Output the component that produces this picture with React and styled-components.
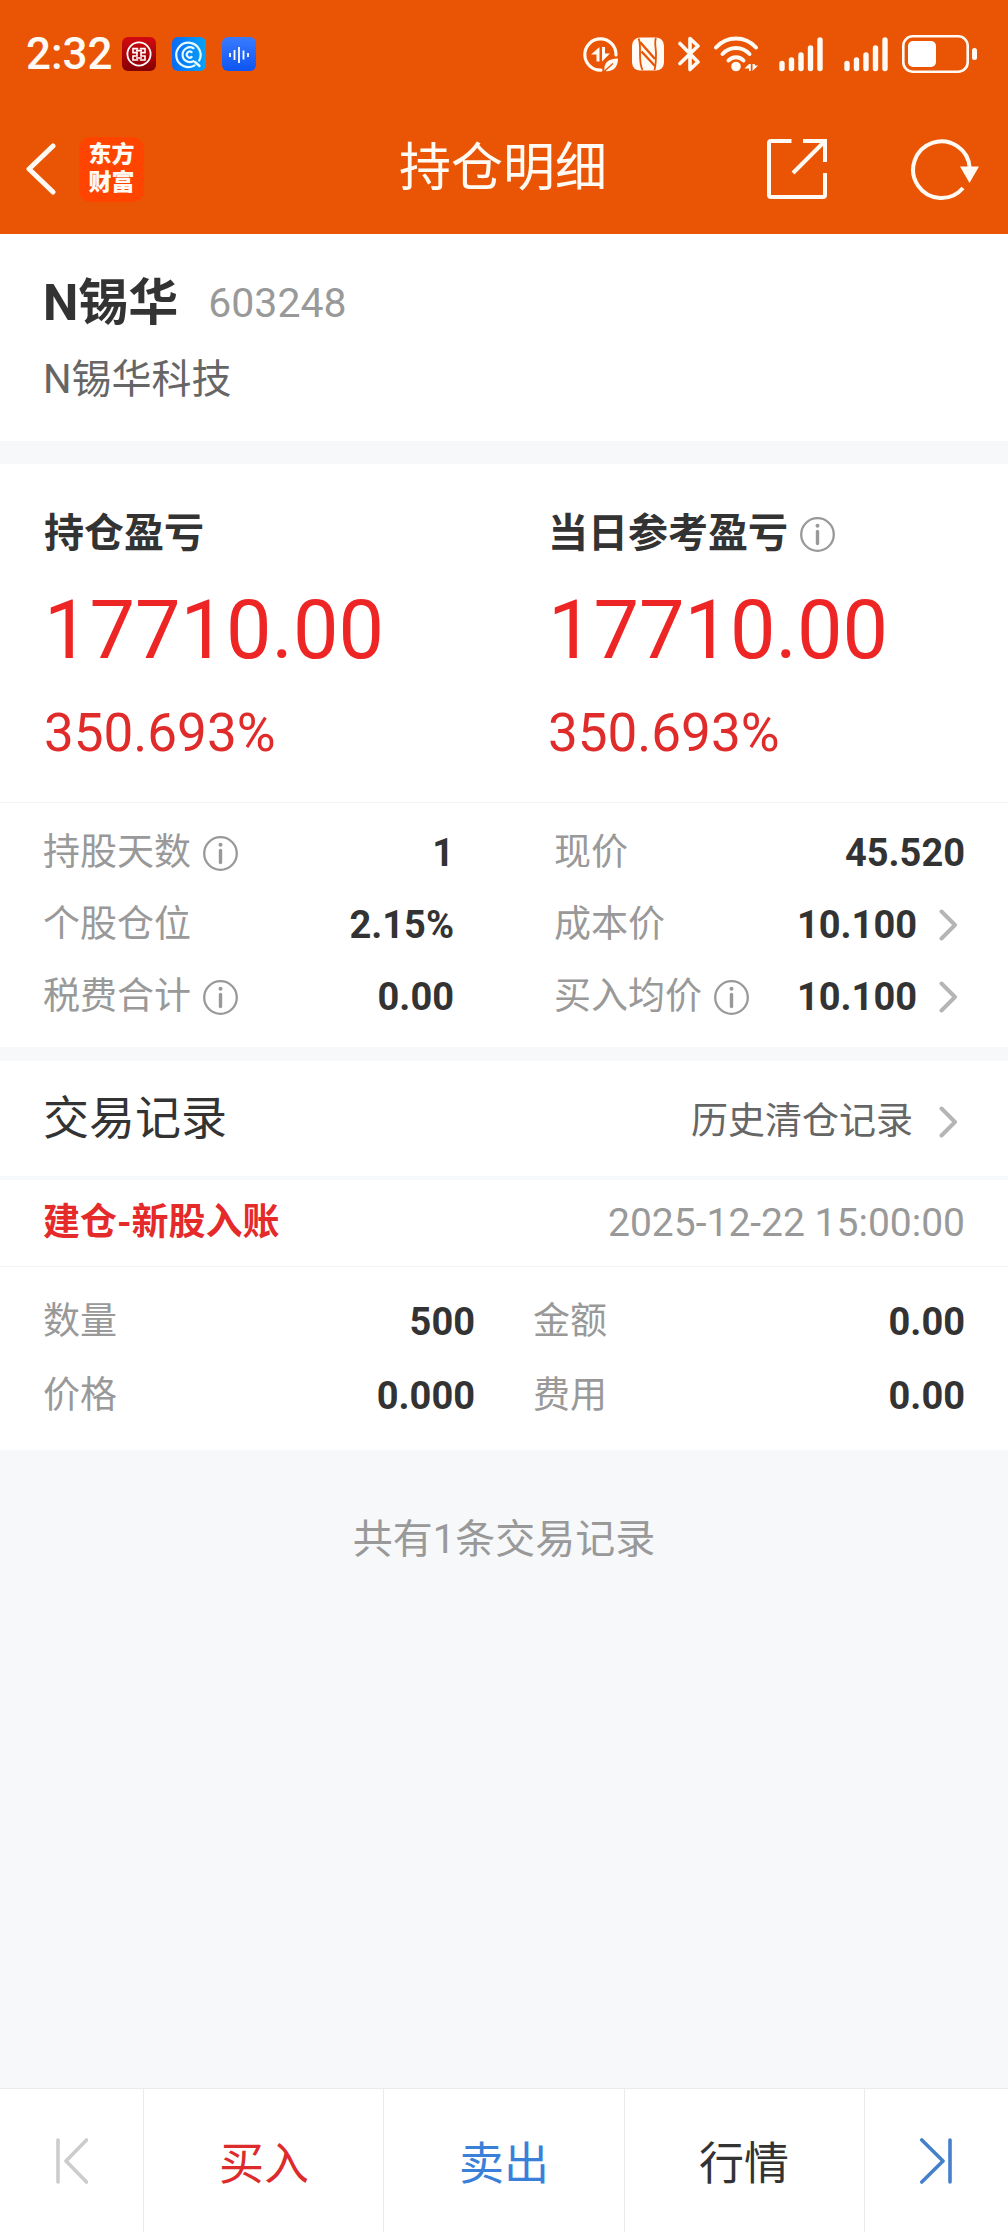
import React from "react";
import styled, { createGlobalStyle } from "styled-components";

const GlobalStyle = createGlobalStyle`
  * {
    box-sizing: border-box;
  }
  body {
    margin: 0;
    background: #f7f8fa;
    font-family: Roboto, "Noto Sans CJK SC", sans-serif;
    color: #333333;
  }
  h1, h2, h3, p, dl, dd {
    margin: 0;
    font-weight: 400;
  }
  button {
    border: 0;
    padding: 0;
    background: none;
    font: inherit;
    color: inherit;
    cursor: pointer;
  }
  svg {
    display: block;
    flex: none;
  }
`;

const Page = styled.div`
  min-height: 100vh;
  display: flex;
  flex-direction: column;
`;

const Top = styled.header`
  background: #e95504;
  color: #fffaf4;
`;
const StatusBar = styled.div`
  height: 108px;
  padding: 0 31px 0 26px;
  display: flex;
  align-items: center;
  justify-content: space-between;
`;
const StatusGroup = styled.div`
  display: flex;
  align-items: center;
  gap: ${({ $gap }) => $gap}px;
`;
const Time = styled.time`
  font-size: 44px;
  font-weight: 500;
  line-height: 48px;
`;
const NavBar = styled.div`
  height: 126px;
  padding: 0 28px 4px 26px;
  display: grid;
  grid-template-columns: 1fr auto 1fr;
  align-items: center;
`;
const NavSide = styled.div`
  display: flex;
  align-items: center;
  justify-content: ${({ $end }) => ($end ? "flex-end" : "flex-start")};
  gap: ${({ $end }) => ($end ? 84 : 23)}px;
`;
const Title = styled.h1`
  font-size: 52px;
  line-height: 60px;
`;
const Logo = styled.div`
  width: 65px;
  height: 65px;
  border-radius: 12px;
  background: #ff4400;
  display: flex;
  flex-direction: column;
  align-items: center;
  justify-content: center;
  font-size: 23px;
  font-weight: 900;
  line-height: 28px;
`;

const Panel = styled.section`
  background: #ffffff;
  margin-bottom: ${({ $gap }) => $gap || 0}px;
`;

const Stock = styled.div`
  padding: 34px 43px 23px;
`;
const StockHead = styled.div`
  display: flex;
  align-items: center;
  gap: 30px;
  line-height: 70px;
`;
const StockName = styled.h2`
  font-size: 50px;
  font-weight: 700;
`;
const StockCode = styled.span`
  font-size: 41px;
  color: #999999;
`;
const StockFull = styled.p`
  padding-top: 4px;
  font-size: 40px;
  line-height: 76px;
  color: #666666;
`;

const Profit = styled.div`
  display: grid;
  grid-template-columns: 1fr 1fr;
  padding: 40px 0 34px;
  border-bottom: 1px solid #f4f4f5;
`;
const ProfitItem = styled.div`
  padding-left: 44px;
`;
const ProfitLabel = styled.h3`
  display: flex;
  align-items: center;
  gap: 12px;
  font-size: 40px;
  font-weight: 700;
  line-height: 60px;
`;
const Amount = styled.p`
  font-size: 81px;
  line-height: 134px;
  color: #ee2525;
`;
const Percent = styled.p`
  font-size: 53px;
  line-height: 70px;
  color: #e02b2b;
`;

const Details = styled.dl`
  display: grid;
  grid-template-columns: 1fr 1fr;
  column-gap: ${({ $gap }) => $gap}px;
  grid-auto-rows: ${({ $row }) => $row}px;
  padding: ${({ $pad }) => $pad};
  line-height: 44px;
`;
const Row = styled.div`
  display: flex;
  align-items: center;
  justify-content: space-between;
`;
const Label = styled.dt`
  display: flex;
  align-items: center;
  gap: 12px;
  font-size: 37px;
  color: #999999;
`;
const Value = styled.dd`
  display: flex;
  align-items: center;
  gap: 22px;
  font-size: 38px;
  font-weight: 700;
`;
const IconButton = styled.button`
  display: flex;
`;

const RecordHead = styled.div`
  display: flex;
  align-items: baseline;
  justify-content: space-between;
  padding: 0 43px;
  border-bottom: 4px solid #f7f8f9;
`;
const RecordTitle = styled.h2`
  font-size: 46px;
  line-height: 115px;
`;
const HistoryLink = styled.a`
  display: flex;
  align-items: center;
  gap: 26px;
  font-size: 37px;
  line-height: 44px;
  color: #666666;
  text-decoration: none;
`;
const RecordMeta = styled.div`
  display: flex;
  align-items: center;
  justify-content: space-between;
  height: 87px;
  padding: 0 43px;
  line-height: 44px;
  border-bottom: 1px solid #f4f4f5;
`;
const RecordType = styled.h3`
  font-size: 37px;
  font-weight: 700;
  color: #e52a2a;
`;
const RecordTime = styled.time`
  font-size: 39px;
  color: #999999;
`;

const Summary = styled.p`
  flex: 1;
  padding-top: 60px;
  text-align: center;
  font-size: 40px;
  line-height: 60px;
  color: #999999;
`;

const BottomBar = styled.nav`
  position: sticky;
  bottom: 0;
  display: flex;
  height: 144px;
  border-top: 1px solid #ebebec;
  background: #ffffff;
`;
const Action = styled.button`
  flex: 5 1 0;
  font-size: 45px;
  color: ${({ $color }) => $color};
  border-right: 1px solid #ebebec;
`;
const Step = styled.button`
  flex: 3 1 0;
  display: flex;
  align-items: center;
  justify-content: center;
  color: ${({ $color }) => $color};

  &:first-child {
    border-right: 1px solid #ebebec;
  }
  &:disabled {
    cursor: default;
  }
`;

const InfoIcon = () => (
  <svg width="35" height="35" viewBox="0 0 35 35" fill="none">
    <circle cx="17.5" cy="17.5" r="16.3" stroke="#999999" strokeWidth="2.3" />
    <circle cx="17.5" cy="8.8" r="2" fill="#999999" />
    <path d="M17.5 14.5v12" stroke="#999999" strokeWidth="3.4" strokeLinecap="round" />
  </svg>
);

const Info = ({ label }) => (
  <IconButton type="button" aria-label={label}>
    <InfoIcon />
  </IconButton>
);

const Chevron = () => (
  <svg width="26" height="32" viewBox="0 0 26 32" fill="none">
    <path
      d="M2.5 2.5 16 16 2.5 29.5"
      stroke="#b5b5b5"
      strokeWidth="4"
      strokeLinecap="round"
      strokeLinejoin="round"
    />
  </svg>
);

const BankApp = () => (
  <svg width="34" height="34" viewBox="0 0 34 34" fill="none">
    <defs>
      <linearGradient id="bank" x1="0" y1="0" x2="0" y2="1">
        <stop stopColor="#d20a10" />
        <stop offset="1" stopColor="#850004" />
      </linearGradient>
    </defs>
    <rect width="34" height="34" rx="6" fill="url(#bank)" />
    <circle cx="17" cy="17" r="11.6" stroke="#fff" strokeWidth="1.8" />
    <path
      d="M16.2 11.6H11v4h4v3.400h-4v4h5.200M17.800 11.600H23v4h-4v3.400h4v4h-5.200M14 13.600h6M14 21h6"
      stroke="#fff"
      strokeWidth="1.600"
    />
  </svg>
);

const SearchApp = () => (
  <svg width="34" height="34" viewBox="0 0 34 34" fill="none">
    <defs>
      <linearGradient id="search" x1="0" y1="0" x2="1" y2="0">
        <stop stopColor="#086bf5" />
        <stop offset="1" stopColor="#08a2fa" />
      </linearGradient>
    </defs>
    <rect width="34" height="34" rx="6" fill="url(#search)" />
    <g stroke="#e6fbff" strokeLinecap="round">
      <path d="M27.2 23.6A12.2 12.2 0 1 0 22.6 28.4" strokeWidth="2.2" />
      <path d="m23 25 4.5 4" strokeWidth="2.4" />
      <path d="M21.5 11.2a7.4 7.4 0 1 0 0 13" strokeWidth="2.2" />
      <path d="M19.6 15.2a3 3 0 1 0 0 4.8" strokeWidth="2.2" />
    </g>
  </svg>
);

const VoiceApp = () => (
  <svg width="34" height="34" viewBox="0 0 34 34" fill="none">
    <defs>
      <linearGradient id="voice" x1="0" y1="0" x2="0" y2="1">
        <stop stopColor="#3a7bff" />
        <stop offset="1" stopColor="#0d55f2" />
      </linearGradient>
    </defs>
    <rect width="34" height="34" rx="6" fill="url(#voice)" />
    <g stroke="#fff" strokeWidth="1.8">
      <path d="M8 16v4M12.5 13v10M17 10v16M21.5 13.5v9M26 16v4" />
    </g>
  </svg>
);

const DataSaverIcon = () => (
  <svg width="35" height="35" viewBox="0 0 35 35" fill="none">
    <path
      d="M33 18A15.600 15.600 0 1 0 18 33.100"
      stroke="currentColor"
      strokeWidth="3.200"
      strokeLinecap="round"
    />
    <path d="M16.500 24.500V10L8 17.500h5.500v7zM19 10v14.500l8-8h-5V10z" fill="currentColor" />
    <path d="M21.500 34c-1-8 3-12 13.500-12.500 0 9-5 13.500-13.500 12.500z" fill="currentColor" />
    <path d="m21.500 34 8.500-7.500" stroke="#e95504" strokeWidth="1.400" />
  </svg>
);

const NfcIcon = () => (
  <svg width="32" height="34" viewBox="0 0 32 34">
    <rect y="0.5" width="32" height="33" rx="8" fill="currentColor" />
    <g stroke="#e95504" fill="none">
      <path d="M6.500 1.500C8.500 5 8 10 8 17s.5 12 2.500 16M24 1c-2 4 0 9 0 16s-.5 12-1.500 16" strokeWidth="1.800" />
      <path d="m8 5 15 17M9.500 14.500 23 29" strokeWidth="2.400" />
    </g>
  </svg>
);

const BluetoothIcon = () => (
  <svg width="22" height="36" viewBox="0 0 22 36" fill="none">
    <path
      d="M2 7.500 20 26l-8 7.500v-31L20 10 2 27.500"
      stroke="currentColor"
      strokeWidth="3.600"
      strokeLinecap="round"
      strokeLinejoin="round"
    />
  </svg>
);

const WifiIcon = () => (
  <svg width="44" height="36" viewBox="0 0 44 36" fill="none">
    <g stroke="currentColor" strokeWidth="4" strokeLinecap="round">
      <path d="M2 11.500C13 -.5 31 -.5 42 11.500" />
      <path d="M8.500 18c7.500-8 19.500-8 27 0" />
      <path d="M14.500 24.500c4-4.500 11-4.500 15 0" />
    </g>
    <circle cx="22" cy="30.500" r="4.800" fill="currentColor" />
    <path d="M35 28v7h1.800v-7zM30.500 32.500 35 28v4.500zM38.500 28v7l5.500-5.500h-3.200V28z" fill="currentColor" />
  </svg>
);

const SignalIcon = () => (
  <svg width="44" height="36" viewBox="0 0 44 36">
    <g stroke="currentColor" strokeWidth="5.400" strokeLinecap="round">
      <path d="M3 27.500v5M12.500 24v8.500M22 19v13.500M31.500 12v20.500M41 4v28.500" />
    </g>
  </svg>
);

const BatteryIcon = () => (
  <svg width="75" height="38" viewBox="0 0 75 38" fill="none">
    <rect x="1.300" y="1.300" width="64.400" height="35.400" rx="9.500" stroke="currentColor" strokeWidth="2.600" />
    <rect x="6" y="6" width="28" height="26" rx="5" fill="#fff" />
    <rect x="70" y="13" width="5" height="12" rx="2.500" fill="currentColor" />
  </svg>
);

const BackIcon = () => (
  <svg width="30" height="52" viewBox="0 0 30 52" fill="none">
    <path
      d="M27 3 3 26l24 23"
      stroke="currentColor"
      strokeWidth="5"
      strokeLinecap="round"
      strokeLinejoin="round"
    />
  </svg>
);

const ShareIcon = () => (
  <svg width="60" height="60" viewBox="0 0 60 60" fill="none">
    <g stroke="currentColor" strokeWidth="4">
      <path d="M24.500 2H4a2 2 0 0 0-2 2v52a2 2 0 0 0 2 2h52a2 2 0 0 0 2-2V34" />
      <path d="M36 2h22v21M58 2 26 34" />
    </g>
  </svg>
);

const RefreshIcon = () => (
  <svg width="69" height="62" viewBox="0 0 69 62" fill="none">
    <path d="M52 50A28.300 28.300 0 1 1 58.700 30" stroke="currentColor" strokeWidth="4" />
    <path d="M49 28.500h19L58.500 45z" fill="currentColor" />
  </svg>
);

const FirstIcon = () => (
  <svg width="32" height="46" viewBox="0 0 32 46" fill="none">
    <g stroke="currentColor" strokeWidth="3.600" strokeLinecap="round" strokeLinejoin="round">
      <path d="M2 2v42M30.500 2 10 23l20.500 21" />
    </g>
  </svg>
);

const LastIcon = () => (
  <svg width="32" height="46" viewBox="0 0 32 46" fill="none">
    <g stroke="currentColor" strokeWidth="3.600" strokeLinecap="round" strokeLinejoin="round">
      <path d="M30 2v42M1.800 2 23 23 1.800 44" />
    </g>
  </svg>
);

const position = [
  { label: "持股天数", value: "1", info: true },
  { label: "现价", value: "45.520" },
  { label: "个股仓位", value: "2.15%" },
  { label: "成本价", value: "10.100", more: true },
  { label: "税费合计", value: "0.00", info: true },
  { label: "买入均价", value: "10.100", info: true, more: true },
];

const record = [
  { label: "数量", value: "500" },
  { label: "金额", value: "0.00" },
  { label: "价格", value: "0.000" },
  { label: "费用", value: "0.00" },
];

const DetailRow = ({ label, value, info, more }) => (
  <Row>
    <Label>
      {label}
      {info && <Info label={`${label}说明`} />}
    </Label>
    <Value>
      {value}
      {more && (
        <IconButton type="button" aria-label={`查看${label}`}>
          <Chevron />
        </IconButton>
      )}
    </Value>
  </Row>
);

const App = () => {
  return (
    <Page>
      <GlobalStyle />
      <Top>
        <StatusBar>
          <StatusGroup $gap={9}>
            <Time>2:32</Time>
            <StatusGroup $gap={16}>
              <BankApp />
              <SearchApp />
              <VoiceApp />
            </StatusGroup>
          </StatusGroup>
          <StatusGroup $gap={14}>
            <DataSaverIcon />
            <NfcIcon />
            <BluetoothIcon />
            <StatusGroup $gap={21}>
              <WifiIcon />
              <SignalIcon />
              <SignalIcon />
            </StatusGroup>
            <BatteryIcon />
          </StatusGroup>
        </StatusBar>
        <NavBar>
          <NavSide>
            <IconButton type="button" aria-label="返回">
              <BackIcon />
            </IconButton>
            <Logo>
              <span>东方</span>
              <span>财富</span>
            </Logo>
          </NavSide>
          <Title>持仓明细</Title>
          <NavSide $end>
            <IconButton type="button" aria-label="分享">
              <ShareIcon />
            </IconButton>
            <IconButton type="button" aria-label="刷新">
              <RefreshIcon />
            </IconButton>
          </NavSide>
        </NavBar>
      </Top>

      <Panel $gap={23}>
        <Stock>
          <StockHead>
            <StockName>N锡华</StockName>
            <StockCode>603248</StockCode>
          </StockHead>
          <StockFull>N锡华科技</StockFull>
        </Stock>
      </Panel>

      <Panel $gap={14}>
        <Profit>
          <ProfitItem>
            <ProfitLabel>持仓盈亏</ProfitLabel>
            <Amount>17710.00</Amount>
            <Percent>350.693%</Percent>
          </ProfitItem>
          <ProfitItem>
            <ProfitLabel>
              当日参考盈亏
              <Info label="当日参考盈亏说明" />
            </ProfitLabel>
            <Amount>17710.00</Amount>
            <Percent>350.693%</Percent>
          </ProfitItem>
        </Profit>
        <Details $gap={100} $row={72} $pad="14px 43px">
          {position.map((item) => (
            <DetailRow key={item.label} {...item} />
          ))}
        </Details>
      </Panel>

      <Panel>
        <RecordHead>
          <RecordTitle>交易记录</RecordTitle>
          <HistoryLink href="#history">
            历史清仓记录
            <Chevron />
          </HistoryLink>
        </RecordHead>
        <RecordMeta>
          <RecordType>建仓-新股入账</RecordType>
          <RecordTime dateTime="2025-12-22T15:00:00">2025-12-22 15:00:00</RecordTime>
        </RecordMeta>
        <Details $gap={58} $row={74} $pad="18px 43px 17px">
          {record.map((item) => (
            <DetailRow key={item.label} {...item} />
          ))}
        </Details>
      </Panel>

      <Summary>共有1条交易记录</Summary>

      <BottomBar>
        <Step type="button" aria-label="上一只" disabled $color="#cccccc">
          <FirstIcon />
        </Step>
        <Action type="button" $color="#dd2b2b">
          买入
        </Action>
        <Action type="button" $color="#3b80d8">
          卖出
        </Action>
        <Action type="button" $color="#333333">
          行情
        </Action>
        <Step type="button" aria-label="下一只" $color="#4480cc">
          <LastIcon />
        </Step>
      </BottomBar>
    </Page>
  );
};

export default App;
